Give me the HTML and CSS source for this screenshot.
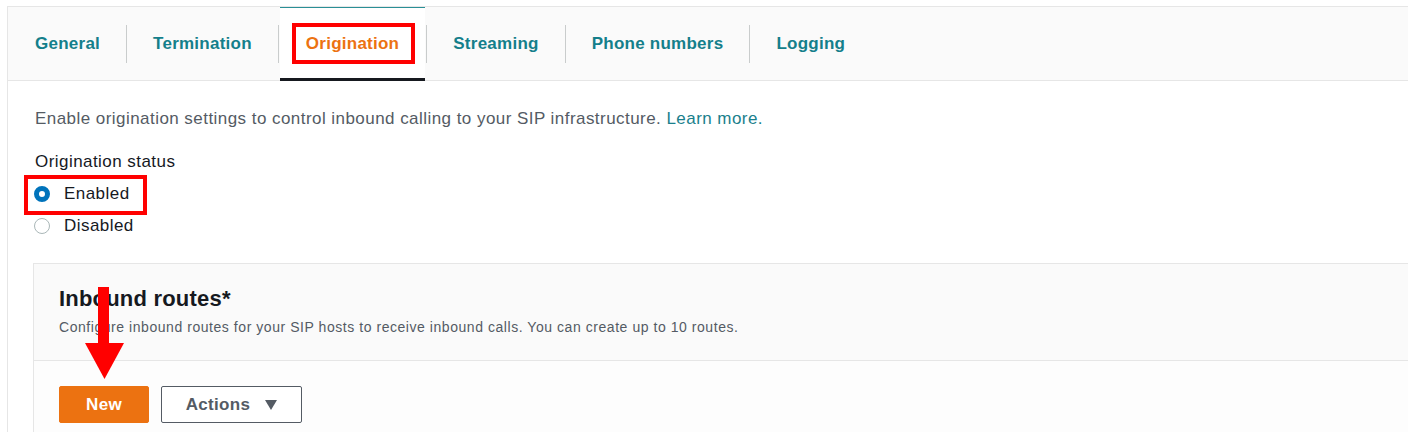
FILE: index.html
```html
<!DOCTYPE html>
<html lang="en">
<head>
<meta charset="utf-8">
<title>Origination</title>
<link rel="stylesheet" href="styles.css">
</head>
<body>
<div class="frame">
  <nav class="tabs">
    <a class="tab">General</a>
    <span class="sep"></span>
    <a class="tab">Termination</a>
    <span class="sep"></span>
    <a class="tab tab-active">Origination<span class="mark mark-tab"></span></a>
    <span class="sep"></span>
    <a class="tab">Streaming</a>
    <span class="sep"></span>
    <a class="tab">Phone numbers</a>
    <span class="sep"></span>
    <a class="tab">Logging</a>
  </nav>
  <section class="content">
    <p class="intro">Enable origination settings to control inbound calling to your SIP infrastructure. <a class="link">Learn more.</a></p>
    <div class="field">
      <div class="field-label">Origination status</div>
      <label class="radio"><span class="dot dot-on"></span>Enabled<span class="mark mark-radio"></span></label>
      <label class="radio"><span class="dot"></span>Disabled</label>
    </div>
    <div class="panel">
      <div class="panel-head">
        <h2 class="panel-title">Inbound routes*</h2>
        <p class="panel-desc">Configure inbound routes for your SIP hosts to receive inbound calls. You can create up to 10 routes.</p>
      </div>
      <div class="panel-body">
        <button class="btn btn-primary">New</button>
        <button class="btn btn-normal">Actions <span class="caret"></span></button>
      </div>
      <svg class="arrow" width="40" height="93" viewBox="0 0 40 93">
        <rect x="13" y="0" width="11" height="57" fill="#f00"/>
        <polygon points="0,56 39,56 19.5,92" fill="#f00"/>
      </svg>
    </div>
  </section>
</div>
</body>
</html>
```
FILE: styles.css
```css
html, body {
  margin: 0;
  padding: 0;
  background: #fff;
  overflow: hidden;
}
body {
  padding: 6px 0 0 7px;
  font-family: "Liberation Sans", Arial, sans-serif;
  color: #16191f;
}
.frame {
  border-top: 1px solid #e6e6e6;
  border-left: 1px solid #e6e6e6;
  width: 1500px;
  height: 440px;
}
.tabs {
  display: flex;
  align-items: center;
  height: 73px;
  padding-left: 1px;
  background: #fafafa;
  border-bottom: 1px solid #e6e6e6;
}
.tab {
  position: relative;
  display: flex;
  align-items: center;
  height: 73px;
  box-sizing: border-box;
  padding: 0 26px;
  font-size: 17px;
  font-weight: bold;
  letter-spacing: 0.25px;
  color: #147f8b;
}
.tab-active {
  color: #ec7211;
  background: #fff;
  border-top: 1px solid #2a8f96;
  border-bottom: 3px solid #16191f;
  margin: 0 1px;
  padding: 2px 26px 0;
  height: 74px;
  align-self: flex-start;
}
.sep {
  width: 1px;
  height: 38px;
  background: #c9cccc;
}
.mark {
  position: absolute;
  border: 4px solid #f00;
  box-sizing: border-box;
  pointer-events: none;
}
.mark-tab {
  left: 12px;
  top: 15px;
  width: 123px;
  height: 41px;
}
.content {
  padding: 27px 25px 0;
}
.intro {
  margin: 0 0 0 2px;
  font-size: 17px;
  line-height: 22px;
  letter-spacing: 0.45px;
  color: #545b64;
}
.link {
  color: #1a7f8c;
}
.field {
  margin: 21px 0 0 2px;
  font-size: 17px;
  letter-spacing: 0.45px;
}
.field-label {
  line-height: 22px;
}
.radio {
  position: relative;
  display: flex;
  align-items: center;
  gap: 14px;
  height: 32px;
  margin-left: -1px;
}
.radio:first-of-type {
  margin-top: 5px;
}
.dot {
  width: 16px;
  height: 16px;
  box-sizing: border-box;
  border-radius: 50%;
  border: 1.5px solid #aab7b8;
  background: #fff;
}
.dot-on {
  border: 5px solid #0073bb;
  background: #fff;
}
.mark-radio {
  left: -10px;
  top: -3px;
  width: 123px;
  height: 40px;
}
.panel {
  position: relative;
  margin-top: 21px;
  border: 1px solid #e6e6e6;
  background: #fdfdfd;
}
.panel-head {
  background: #fafafa;
  border-bottom: 1px solid #e6e6e6;
  padding: 21px 25px 23px;
}
.panel-title {
  margin: 0;
  font-size: 22px;
  line-height: 28px;
  letter-spacing: 0.2px;
  font-weight: bold;
}
.panel-desc {
  margin: 4px 0 0;
  font-size: 14px;
  line-height: 20px;
  letter-spacing: 0.55px;
  color: #545b64;
}
.panel-body {
  display: flex;
  gap: 12px;
  padding: 25px 25px 20px;
}
.btn {
  height: 37px;
  box-sizing: border-box;
  border-radius: 2px;
  font-family: inherit;
  font-size: 17px;
  font-weight: bold;
  letter-spacing: 0.3px;
  cursor: pointer;
}
.btn-primary {
  width: 90px;
  background: #ec7211;
  border: 1px solid #ec7211;
  color: #fff;
}
.btn-normal {
  width: 141px;
  background: #fff;
  border: 1px solid #545b64;
  color: #545b64;
  display: flex;
  align-items: center;
  justify-content: center;
  gap: 15px;
}
.caret {
  width: 0;
  height: 0;
  border-left: 6px solid transparent;
  border-right: 6px solid transparent;
  border-top: 10px solid #545b64;
}
.arrow {
  position: absolute;
  left: 51px;
  top: 23px;
}
```
